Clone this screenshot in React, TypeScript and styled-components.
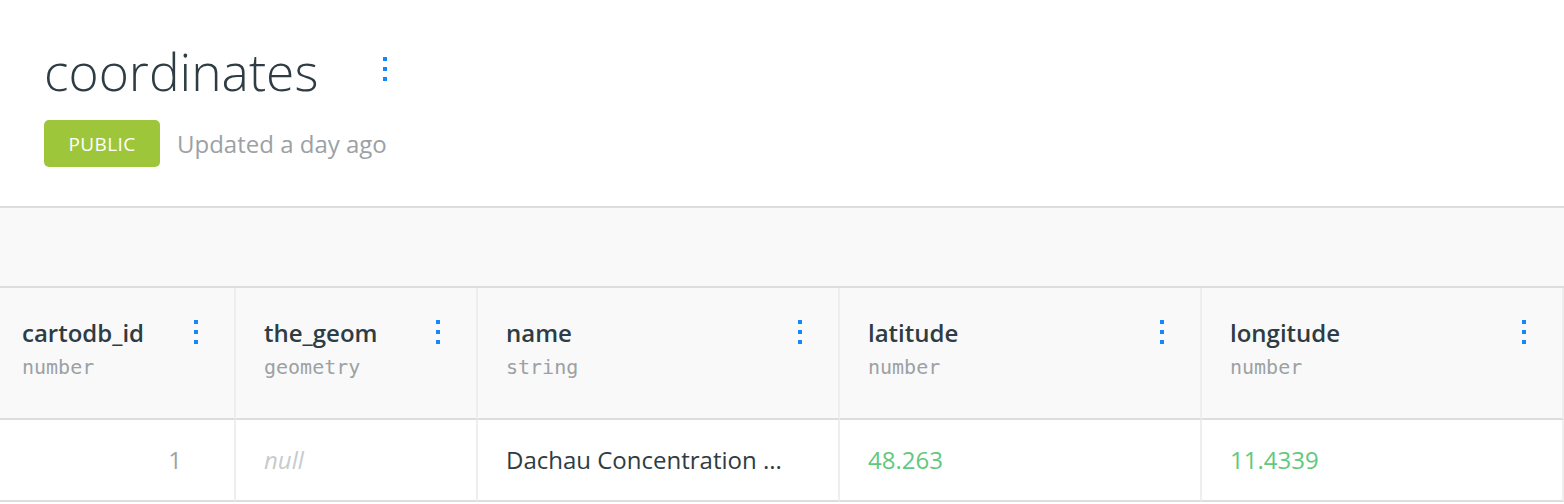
import styled, { createGlobalStyle } from "styled-components";

const GlobalStyle = createGlobalStyle`
  html, body {
    margin: 0;
    padding: 0;
    background: #fff;
    font-family: "Open Sans", "Liberation Sans", sans-serif;
    color: #2e3c43;
  }
`;

const Page = styled.div`
  width: 1564px;
  height: 504px;
  overflow: hidden;
`;

const Header = styled.header`
  padding: 37px 44px 0;
  height: 206px;
  box-sizing: border-box;
`;

const TitleRow = styled.div`
  display: flex;
  align-items: flex-start;
  gap: 65px;
`;

const Title = styled.h1`
  margin: 0;
  font-size: 51.5px;
  font-weight: 300;
  line-height: 68px;
  color: #2e3c43;
`;

const MetaRow = styled.div`
  display: flex;
  align-items: center;
  gap: 17px;
  margin-top: 15px;
`;

const Badge = styled.span`
  display: inline-flex;
  align-items: center;
  justify-content: center;
  width: 116px;
  height: 47px;
  border-radius: 5px;
  background: #9dc63b;
  color: #fff;
  font-size: 19px;
  letter-spacing: 0.4px;
`;

const Updated = styled.span`
  font-size: 24px;
  color: #9ba1a5;
`;

const Band = styled.div`
  height: 78px;
  border-top: 2px solid #dddddd;
  border-bottom: 2px solid #dddddd;
  background: #f9f9f9;
`;

const Grid = styled.div`
  display: grid;
  grid-template-columns: 236px 242px 362px 362px 362px;
`;

const HeadCell = styled.div<{ $first?: boolean }>`
  height: 132px;
  box-sizing: border-box;
  padding: 28px 36px 0 ${(p) => (p.$first ? 22 : 28)}px;
  background: #f9f9f9;
  border-right: 2px solid #eeeeee;
  border-bottom: 2px solid #dddddd;
  display: flex;
  justify-content: space-between;
  align-items: flex-start;
`;

const ColText = styled.div`
  display: flex;
  flex-direction: column;
`;

const ColName = styled.span`
  font-size: 24px;
  font-weight: 600;
  line-height: 34px;
  color: #2e3c43;
`;

const ColType = styled.span`
  font-family: "DejaVu Sans Mono", "Liberation Mono", monospace;
  font-size: 20px;
  line-height: 24px;
  margin-top: 5px;
  color: #9ba1a5;
`;

const Cell = styled.div<{ $align?: "left" | "right"; $tone?: "text" | "null" | "number" | "id"; $first?: boolean }>`
  height: 82px;
  box-sizing: border-box;
  padding: 0 ${(p) => (p.$align === "right" ? 52 : 28)}px 2px ${(p) => (p.$first ? 22 : 28)}px;
  border-right: 2px solid #eeeeee;
  border-bottom: 2px solid #dddddd;
  display: flex;
  align-items: center;
  justify-content: ${(p) => (p.$align === "right" ? "flex-end" : "flex-start")};
  font-size: 24px;
  font-style: ${(p) => (p.$tone === "null" ? "italic" : "normal")};
  color: ${(p) =>
    p.$tone === "null"
      ? "#c8cbcd"
      : p.$tone === "number"
      ? "#5fc97d"
      : p.$tone === "id"
      ? "#9ba1a5"
      : "#2e3c43"};
  white-space: nowrap;
`;

const Kebab = ({ top = 0 }: { top?: number }) => (
  <svg width="4" height="24" viewBox="0 0 4 24" style={{ marginTop: top, flexShrink: 0 }}>
    <rect x="0" y="0" width="4" height="4" fill="#1785fb" />
    <rect x="0" y="10" width="4" height="4" fill="#1785fb" />
    <rect x="0" y="20" width="4" height="4" fill="#1785fb" />
  </svg>
);

const columns = [
  { name: "cartodb_id", type: "number" },
  { name: "the_geom", type: "geometry" },
  { name: "name", type: "string" },
  { name: "latitude", type: "number" },
  { name: "longitude", type: "number" },
];

export default function App() {
  return (
    <Page>
      <GlobalStyle />
      <Header>
        <TitleRow>
          <Title>coordinates</Title>
          <Kebab top={20} />
        </TitleRow>
        <MetaRow>
          <Badge>PUBLIC</Badge>
          <Updated>Updated a day ago</Updated>
        </MetaRow>
      </Header>
      <Band />
      <Grid>
        {columns.map((col, i) => (
          <HeadCell key={col.name} $first={i === 0}>
            <ColText>
              <ColName>{col.name}</ColName>
              <ColType>{col.type}</ColType>
            </ColText>
            <Kebab top={4} />
          </HeadCell>
        ))}
        <Cell $first $align="right" $tone="id">1</Cell>
        <Cell $tone="null">null</Cell>
        <Cell $tone="text">Dachau Concentration ...</Cell>
        <Cell $tone="number">48.263</Cell>
        <Cell $tone="number">11.4339</Cell>
      </Grid>
    </Page>
  );
}
